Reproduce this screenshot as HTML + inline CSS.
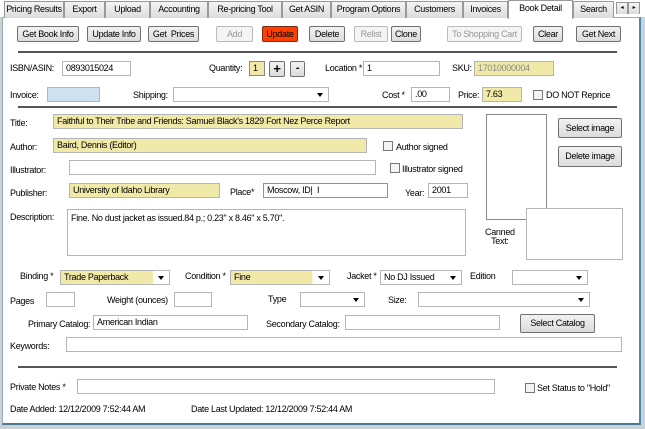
<!DOCTYPE html><html><head><style>
*{box-sizing:border-box}
body{margin:0;width:645px;height:429px;overflow:hidden;background:#fff;font-family:"Liberation Sans",sans-serif;font-size:9px;color:#000;letter-spacing:-0.3px;position:relative}
.a{position:absolute}
.tab{position:absolute;top:1px;height:17px;border:1px solid #999;border-bottom:none;background:linear-gradient(#f4f4f4,#dcdcdc);text-align:center;line-height:15px;font-size:9px}
.btn{position:absolute;height:16px;border:1px solid #707070;border-radius:2px;background:linear-gradient(#f2f2f2,#dcdcdc);text-align:center;line-height:14px;font-size:9px}
.dis{color:#999;border-color:#bbb;background:#f4f4f4}
.in{position:absolute;height:15px;border:1px solid #b5b5b5;background:#fff;padding-left:3px;line-height:13px;font-size:9px;white-space:nowrap}
.y{background:#f0e9a8}
.sel::after{content:"";position:absolute;right:5px;top:5px;border-left:3px solid transparent;border-right:3px solid transparent;border-top:4px solid #000}
.hr{position:absolute;height:2px;background:#555;left:18px;width:599px}
.cb{position:absolute;width:10px;height:10px;border:1px solid #777;background:#f4f4f4}
</style></head><body>
<div class="a" style="left:0;top:17px;width:645px;height:412px;background:#c8d0d8"></div>
<div class="a" style="left:2px;top:17px;width:639px;height:408px;background:#fff;border:1px solid #9aa;border-right:2px solid #4a8ab0;border-bottom:2px solid #4a7890"></div>
<div class="tab" style="left:4px;width:60px">Pricing Results</div>
<div class="tab" style="left:64px;width:41px">Export</div>
<div class="tab" style="left:105px;width:45px">Upload</div>
<div class="tab" style="left:150px;width:58px">Accounting</div>
<div class="tab" style="left:208px;width:74px">Re-pricing Tool</div>
<div class="tab" style="left:282px;width:49px">Get ASIN</div>
<div class="tab" style="left:331px;width:75px">Program Options</div>
<div class="tab" style="left:406px;width:57px">Customers</div>
<div class="tab" style="left:463px;width:45px">Invoices</div>
<div class="tab" style="left:508px;width:65px;top:0;height:19px;background:#fff;line-height:14px;z-index:2;border-color:#999">Book Detail</div>
<div class="tab" style="left:573px;width:41px">Search</div>
<div class="tab" style="left:616px;width:12px;top:2px;height:12px;font-size:6px;line-height:10px">◂</div>
<div class="tab" style="left:628px;width:12px;top:2px;height:12px;font-size:6px;line-height:10px">▸</div>

<div class="btn" style="left:17px;top:26px;width:62px">Get Book Info</div>
<div class="btn" style="left:87px;top:26px;width:54px">Update Info</div>
<div class="btn" style="left:148px;top:26px;width:51px">Get &nbsp;Prices</div>
<div class="btn dis" style="left:216px;top:26px;width:37px">Add</div>
<div class="btn" style="left:262px;top:26px;width:36px;background:#ff4000;border-color:#7a2a10">Update</div>
<div class="btn" style="left:309px;top:26px;width:36px">Delete</div>
<div class="btn dis" style="left:354px;top:26px;width:34px">Relist</div>
<div class="btn" style="left:391px;top:26px;width:30px">Clone</div>
<div class="btn dis" style="left:447px;top:26px;width:75px">To Shopping Cart</div>
<div class="btn" style="left:533px;top:26px;width:30px">Clear</div>
<div class="btn" style="left:576px;top:26px;width:45px">Get Next</div>
<div class="hr" style="top:51px"></div>

<div class="a" style="left:10px;top:63px">ISBN/ASIN:</div>
<div class="in" style="left:62px;top:61px;width:69px">0893015024</div>
<div class="a" style="left:209px;top:63px">Quantity:</div>
<div class="in y" style="left:249px;top:61px;width:16px;border-color:#888">1</div>
<div class="btn" style="left:269px;top:61px;width:16px;font-size:13px;font-weight:bold;line-height:14px">+</div>
<div class="btn" style="left:290px;top:61px;width:15px;font-size:11px;font-weight:bold;line-height:13px">-</div>
<div class="a" style="left:325px;top:63px">Location *</div>
<div class="in" style="left:363px;top:61px;width:77px">1</div>
<div class="a" style="left:452px;top:63px">SKU:</div>
<div class="in y" style="left:474px;top:61px;width:80px;color:#888">17010000004</div>

<div class="a" style="left:10px;top:90px">Invoice:</div>
<div class="in" style="left:47px;top:87px;width:53px;background:#cfe0f0"></div>
<div class="a" style="left:133px;top:90px">Shipping:</div>
<div class="in sel" style="left:173px;top:87px;width:156px"></div>
<div class="a" style="left:382px;top:90px">Cost *</div>
<div class="in" style="left:411px;top:87px;width:39px">.00</div>
<div class="a" style="left:458px;top:90px">Price:</div>
<div class="in y" style="left:482px;top:87px;width:40px">7.63</div>
<div class="cb" style="left:533px;top:90px"></div>
<div class="a" style="left:546px;top:90px">DO NOT Reprice</div>
<div class="hr" style="top:106px"></div>

<div class="a" style="left:10px;top:118px">Title:</div>
<div class="in y" style="left:53px;top:114px;width:410px">Faithful to Their Tribe and Friends: Samuel Black's 1829 Fort Nez Perce Report</div>
<div class="a" style="left:10px;top:142px">Author:</div>
<div class="in y" style="left:53px;top:138px;width:314px">Baird, Dennis (Editor)</div>
<div class="cb" style="left:383px;top:141px"></div>
<div class="a" style="left:396px;top:142px">Author signed</div>
<div class="a" style="left:10px;top:165px">Illustrator:</div>
<div class="in" style="left:69px;top:160px;width:307px"></div>
<div class="cb" style="left:390px;top:163px"></div>
<div class="a" style="left:402px;top:164px">Illustrator signed</div>
<div class="a" style="left:10px;top:188px">Publisher:</div>
<div class="in y" style="left:69px;top:183px;width:151px">University of Idaho Library</div>
<div class="a" style="left:230px;top:187px">Place*</div>
<div class="in" style="left:263px;top:183px;width:125px;border-color:#6a9ad0">Moscow, ID| &nbsp;I</div>
<div class="a" style="left:405px;top:188px">Year:</div>
<div class="in" style="left:428px;top:183px;width:40px">2001</div>
<div class="a" style="left:486px;top:114px;width:61px;height:106px;border:1px solid #888"></div>
<div class="btn" style="left:558px;top:118px;width:64px;height:20px;line-height:18px">Select image</div>
<div class="btn" style="left:558px;top:146px;width:64px;height:21px;line-height:19px">Delete image</div>

<div class="a" style="left:10px;top:212px">Description:</div>
<div class="in" style="left:67px;top:209px;width:399px;height:47px;padding-top:2px">Fine. No dust jacket as issued.84 p.; 0.23" x 8.46" x 5.70".</div>
<div class="a" style="left:485px;top:228px;text-align:center;line-height:9px">Canned<br>Text:</div>
<div class="in" style="left:526px;top:208px;width:97px;height:52px"></div>

<div class="a" style="left:20px;top:271px">Binding *</div>
<div class="in sel" style="left:60px;top:270px;width:110px;background:linear-gradient(90deg,#f0e9a8 85%,#fff 85%)">Trade Paperback</div>
<div class="a" style="left:185px;top:271px">Condition *</div>
<div class="in sel" style="left:230px;top:270px;width:100px;background:linear-gradient(90deg,#f0e9a8 83%,#fff 83%)">Fine</div>
<div class="a" style="left:347px;top:271px">Jacket *</div>
<div class="in sel" style="left:380px;top:270px;width:82px">No DJ Issued</div>
<div class="a" style="left:470px;top:271px">Edition</div>
<div class="in sel" style="left:512px;top:270px;width:76px"></div>

<div class="a" style="left:10px;top:296px">Pages</div>
<div class="in" style="left:46px;top:292px;width:29px"></div>
<div class="a" style="left:107px;top:295px">Weight (ounces)</div>
<div class="in" style="left:174px;top:292px;width:38px"></div>
<div class="a" style="left:268px;top:294px">Type</div>
<div class="in sel" style="left:300px;top:292px;width:65px"></div>
<div class="a" style="left:388px;top:295px">Size:</div>
<div class="in sel" style="left:418px;top:292px;width:172px"></div>

<div class="a" style="left:28px;top:319px">Primary Catalog:</div>
<div class="in" style="left:93px;top:315px;width:155px">American Indian</div>
<div class="a" style="left:266px;top:319px">Secondary Catalog:</div>
<div class="in" style="left:345px;top:315px;width:155px"></div>
<div class="btn" style="left:520px;top:314px;width:75px;height:19px;line-height:17px">Select Catalog</div>
<div class="a" style="left:10px;top:341px">Keywords:</div>
<div class="in" style="left:66px;top:337px;width:556px"></div>
<div class="hr" style="top:366px"></div>

<div class="a" style="left:10px;top:382px">Private Notes *</div>
<div class="in" style="left:77px;top:379px;width:418px"></div>
<div class="cb" style="left:525px;top:383px"></div>
<div class="a" style="left:537px;top:383px">Set Status to "Hold"</div>
<div class="a" style="left:10px;top:404px">Date Added: 12/12/2009 7:52:44 AM</div>
<div class="a" style="left:191px;top:404px">Date Last Updated: 12/12/2009 7:52:44 AM</div>
</body></html>
